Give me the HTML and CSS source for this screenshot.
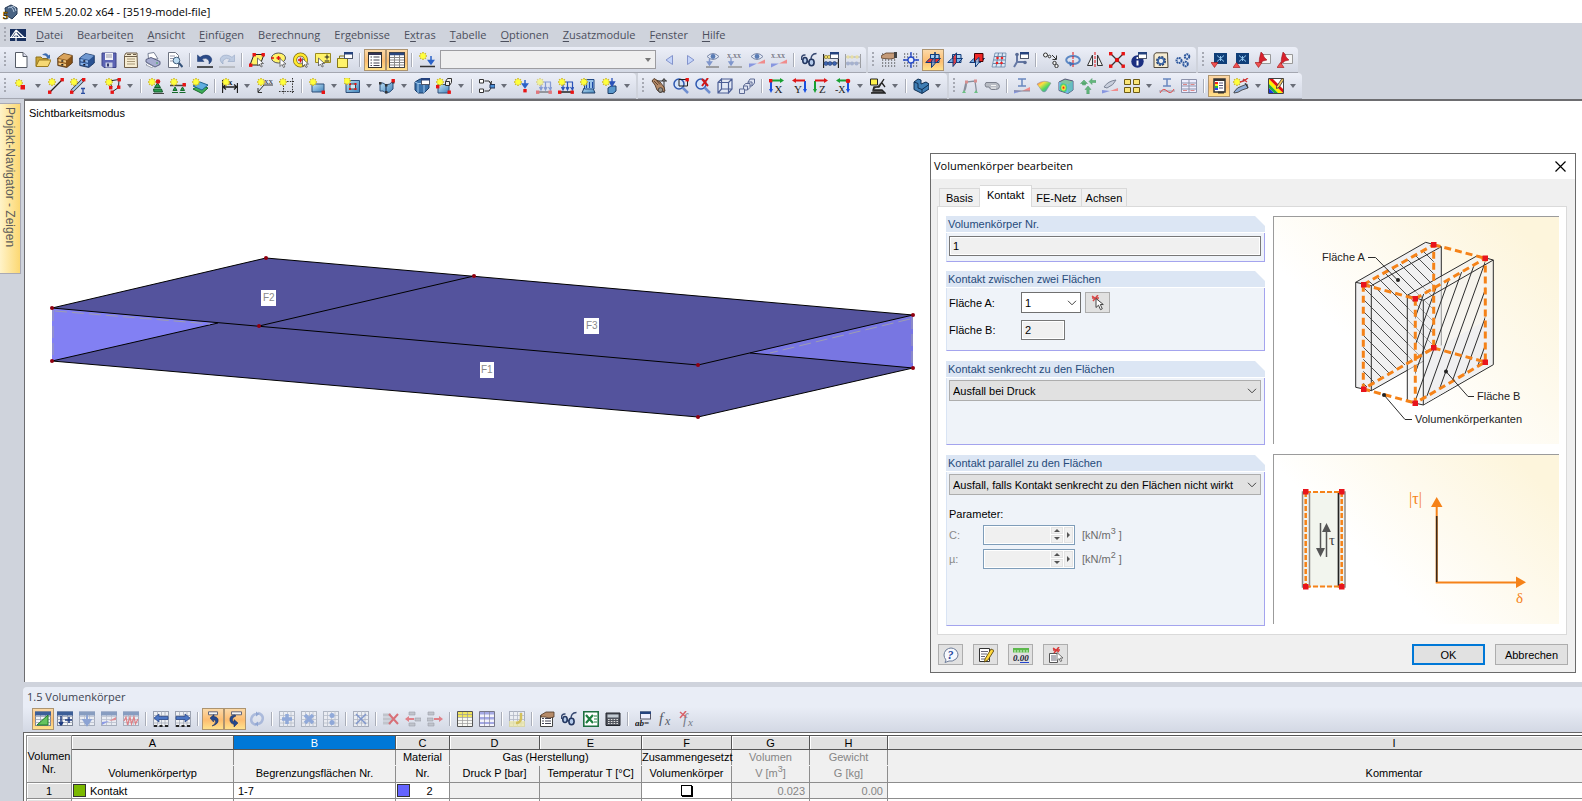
FILE: index.html
```html
<!DOCTYPE html>
<html lang="de">
<head>
<meta charset="utf-8">
<title>RFEM 5.20.02 x64 - [3519-model-file]</title>
<link rel="stylesheet" href="styles.css">
</head>
<body>
<svg class="paints" aria-hidden="true">
<linearGradient id="gBlue" x1="0" y1="0" x2="1" y2="1"><stop offset="0" stop-color="#c4e4f8"/><stop offset="1" stop-color="#3f82b8"/></linearGradient>
<linearGradient id="gRain" x1="0" y1="0" x2="1" y2="1"><stop offset="0" stop-color="#ff4a4a"/><stop offset=".3" stop-color="#ffe040"/><stop offset=".6" stop-color="#50d860"/><stop offset="1" stop-color="#4070ff"/></linearGradient>
<radialGradient id="gHeat"><stop offset="0" stop-color="#e81010"/><stop offset=".35" stop-color="#ffe640"/><stop offset=".65" stop-color="#40d070"/><stop offset="1" stop-color="#70b8e8"/></radialGradient>
</svg>
<svg class="sprite" aria-hidden="true">
<defs>
<g id="star"><path d="M4 0v8M0 4h8M1.200 1.200l5.600 5.600M6.800 1.200L1.200 6.800" stroke="#cdb820" stroke-width="1.500"/><circle cx="4" cy="4" r="2.700" fill="#ffff3a"/></g>
<g id="cur"><path d="M0 0v8l2-2 1.500 3 1.300-.6L3.400 5.500H6z" fill="#fff" stroke="#555" stroke-width=".8"/></g>
<g id="nd"><rect width="3.400" height="3.400" fill="#e81414"/></g>
<g id="sheet"><rect x=".5" y="1" width="15" height="13.500" fill="#f3f5f8" stroke="#7e8798"/><path d="M.5 5.500h15M.5 8.500h15M.5 11.500h15M5.500 4v10M10.500 4v10" stroke="#9aa2b2" stroke-width=".8"/><path d="M0 .5h16v4H0z" fill="#3d5f98"/></g>
<g id="gridg"><rect x=".5" y=".5" width="15" height="15" fill="#eef0f4" stroke="#9aa1b0"/><path d="M.5 4.500h15M.5 8.500h15M.5 12h15M4.500 0v16M8.500 0v16M12 0v16" stroke="#a7adba" stroke-width=".8"/></g>
<g id="dots" stroke="#333" stroke-width="1.200" stroke-dasharray="1.200 1.800"><path d="M1 2h15M1 5h15M1 8h15M1 11h15M1 14h15"/></g>
<g id="win"><rect x=".5" y=".5" width="8" height="6" fill="#fff" stroke="#4e566a"/><path d="M0 0h9v2.500H0z" fill="#24427e"/></g>
</defs>
<symbol id="logo5" viewBox="0 0 16 16"><path d="M3 4l6-3 6 3v6l-5 5-6-4z" fill="#4a6484" stroke="#263a55"/><path d="M6 4q4-3 6 4M9 3q4-2 5 4" stroke="#b8cbe0" fill="none"/><text x="1" y="15" font-size="11" font-weight="700" fill="#e9a400" stroke="#3e3000" stroke-width=".6">5</text></symbol>
<symbol id="bridge" viewBox="0 0 16 12"><path d="M0 0h16v12H0z" fill="#18305f"/><path d="M0 8.500h16M6 1v11M6 1L1 8.500M6 1l8 7.500M6 4L3 8.500M6 4l4 4.500" stroke="#fff" stroke-width="1.200" fill="none"/></symbol>
<symbol id="new" viewBox="0 0 16 16"><path d="M2.500.5h7.500l4 4v11H2.500z" fill="#fff" stroke="#555b66"/><path d="M10 .5v4h4" fill="#dde" stroke="#555b66"/></symbol>
<symbol id="open" viewBox="0 0 16 16"><path d="M1 14V5h5l1.500 1.500H13V14z" fill="#c9a437" stroke="#8e701a"/><path d="M1 14.500L4 8h12l-3 6.500z" fill="#f6d873" stroke="#9a7a20"/><path d="M7 3q4-3.500 6.500.5l1.500-1v4h-4l1.200-1.200Q10.500 2.800 7 3z" fill="#3c6cb0"/></symbol>
<symbol id="cabB" viewBox="0 0 16 16"><path d="M.7 6l6-4.500 8.600 2V11l-5.500 4.500-9-2z" fill="#8a5418" stroke="#4f300c" stroke-width=".8"/><path d="M1 6l9 2 5-4.300-8-2z" fill="#d9a35c"/><path d="M1.500 7l7.500 1.600v2.200L1.500 9.200zM1.500 10.500L9 12v2.300l-7.500-1.600z" fill="#f0c67e"/><path d="M4.300 8.300h2v1.400h-2zM4.300 12h2v1.400h-2z" fill="#222"/></symbol>
<symbol id="cabU" viewBox="0 0 16 16"><path d="M.7 6l6-4.500 8.600 2V11l-5.500 4.500-9-2z" fill="#2a5292" stroke="#12305e" stroke-width=".8"/><path d="M1 6l9 2 5-4.300-8-2z" fill="#7098d0"/><path d="M1.500 7l7.500 1.600v2.200L1.500 9.200zM1.500 10.500L9 12v2.300l-7.500-1.600z" fill="#8ab4e8"/><path d="M4.300 8.300h2v1.400h-2zM4.300 12h2v1.400h-2z" fill="#112"/></symbol>
<symbol id="save" viewBox="0 0 16 16"><path d="M1 1h14v14.500H3L1 13.500z" fill="#5c64b4" stroke="#3e4488"/><path d="M4 1h8v7H4z" fill="#f2f2f6"/><path d="M5 3h6M5 5h6" stroke="#99a"/><path d="M4.500 10.500h7v5h-7z" fill="#cdd2e6"/><path d="M6 11.500h2v3H6z" fill="#333a70"/></symbol>
<symbol id="mgr" viewBox="0 0 16 16"><path d="M1.500 3.500L3 1h11l.5 14.500h-13z" fill="#f6ecd2" stroke="#6d5d48"/><path d="M2 4.500h12M4 2.500h4M10 2.500h3" stroke="#6d5d48"/><path d="M4 7h8M4 9.500h8M4 12h8" stroke="#a89878"/></symbol>
<symbol id="print" viewBox="0 0 16 16"><path d="M3.500 7L3 1.500l6-1L13 7z" fill="#fff" stroke="#7a8296"/><path d="M1 7.500l5-2 9 4v3l-5 2.500-9-5z" fill="#a6acd0" stroke="#5a6080"/><path d="M2.500 11.500l6 3-2 1-5.500-2.500z" fill="#fff" stroke="#7a8296" stroke-width=".7"/><circle cx="12" cy="11" r=".8" fill="#3a4"/></symbol>
<symbol id="prev" viewBox="0 0 16 16"><path d="M1.500.5h7l3 3v12h-10z" fill="#fff" stroke="#6c7280"/><path d="M3 4h5M3 6.500h4M3 9h3" stroke="#99a"/><circle cx="9.500" cy="8.500" r="3.300" fill="#bcdcf2" stroke="#44607e"/><path d="M12 11l3.500 4" stroke="#34527a" stroke-width="2"/></symbol>
<symbol id="undo" viewBox="0 0 16 16"><path d="M.5 3v6.500H7L5 7.300Q9 5 11.500 8q1 1.800.5 4Q17 8 13 4.300 8.500 1.500 3 5.300z" fill="#2a4a88" stroke="#17356a" stroke-width=".5"/><path d="M0 15h16" stroke="#222" stroke-width="1.500"/></symbol>
<symbol id="redo" viewBox="0 0 16 16"><g opacity=".5"><path d="M15.500 3v6.500H9L11 7.300Q7 5 4.500 8q-1 1.800-.5 4Q-1 8 3 4.300 7.500 1.500 13 5.300z" fill="#9db4d6" stroke="#4a6a9a" stroke-width=".6"/><path d="M0 15h16" stroke="#888" stroke-width="1.500"/></g></symbol>
<symbol id="selP" viewBox="0 0 16 16"><path d="M5 2.500h10L11 13H1z" fill="#fff36a" stroke="#222"/><use href="#nd" x="3.500" y="1"/><use href="#nd" x="12.500" y="1"/><use href="#nd" x="0" y="11.500"/><use href="#cur" x="8.500" y="6"/></symbol>
<symbol id="selE" viewBox="0 0 16 16"><ellipse cx="7.500" cy="6" rx="7" ry="5" fill="#fff36a" stroke="#555"/><path d="M0 6h3M5.500 6h4M7.500 4v4" stroke="#e01010" stroke-width="1.500"/><use href="#cur" x="9" y="6.500"/></symbol>
<symbol id="selR" viewBox="0 0 16 16"><circle cx="7.500" cy="8" r="5.500" fill="none" stroke="#7d6a10" stroke-width="4"/><circle cx="7.500" cy="8" r="5.500" fill="none" stroke="#ffe92e" stroke-width="2.600"/><path d="M5 8h5M7.500 5.500v5" stroke="#e01010" stroke-width="1.500"/><use href="#cur" x="9.500" y="6.500"/></symbol>
<symbol id="selQ" viewBox="0 0 16 16"><path d="M.5 1.500h15v9H.5z" fill="#fff36a" stroke="#9a8a20"/><path d="M12 2.500v5M9.700 5h4.600M9.700 9h4.600" stroke="#222"/><use href="#cur" x="3.500" y="6"/></symbol>
<symbol id="winY" viewBox="0 0 16 16"><path d="M.5 6.500h10v9H.5z" fill="#fff36a" stroke="#857718"/><path d="M2.500 6V4h5" stroke="#857718" fill="none"/><use href="#win" x="7" y="0"/></symbol>
<symbol id="list" viewBox="0 0 16 16"><rect x="1.500" y=".5" width="13" height="15" fill="#fff" stroke="#333"/><path d="M2 2h12" stroke="#335" stroke-width="2"/><path d="M6.500 5h6M6.500 8h6M6.500 11h6M6.500 13.500h6" stroke="#445"/><path d="M3.500 5h1.500M3.500 8h1.500M3.500 11h1.500M3.500 13.500h1.500" stroke="#445"/></symbol>
<symbol id="tabl" viewBox="0 0 16 16"><rect x=".5" y=".5" width="15" height="15" fill="#fff" stroke="#444"/><path d="M1 2h14" stroke="#29457d" stroke-width="2.500"/><path d="M1 5.500h14M1 8h14M1 10.500h14M1 13h14M5.500 3v12M10.500 3v12" stroke="#888"/></symbol>
<symbol id="ldst" viewBox="0 0 16 16"><use href="#star"/><path d="M12 4v7M9.500 8.500L12 12l2.500-3.500z" stroke="#2a62c8" stroke-width="1.500" fill="#2a62c8"/><path d="M1 14.500h15" stroke="#333" stroke-width="1.500"/></symbol>
<symbol id="triL" viewBox="0 0 16 16"><path d="M11.500 3.500v9L5 8z" fill="#c4d4fa" stroke="#8494cc"/></symbol>
<symbol id="triR" viewBox="0 0 16 16"><path d="M4.500 3.500v9L11 8z" fill="#c4d4fa" stroke="#8494cc"/></symbol>
<symbol id="eyeP" viewBox="0 0 16 16"><path d="M2 4.500q6-6 12 0-6 6-12 0z" fill="#e2e8f4" stroke="#7b88a8"/><circle cx="8" cy="4.500" r="2.400" fill="#5a7cb4"/><path d="M4.500 7v4M2.500 10l2 3 2-3z" stroke="#7f96cc" fill="#7f96cc" stroke-width="1.500"/><path d="M1 15h13" stroke="#888" stroke-width="1.500"/></symbol>
<symbol id="xxA" viewBox="0 0 16 16"><text x="0" y="5.500" font-size="8" fill="#556">x.xx</text><path d="M4 6v6M2 10l2 3 2-3z" stroke="#7f96cc" fill="#7f96cc" stroke-width="1.300"/><path d="M1 15h14" stroke="#999" stroke-width="1.500"/></symbol>
<symbol id="eyeD" viewBox="0 0 16 16"><path d="M2 4.500q6-6 12 0-6 6-12 0z" fill="#e2e8f4" stroke="#7b88a8"/><circle cx="8" cy="4.500" r="2.400" fill="#5a7cb4"/><path d="M0 15.500V11.500h8z" fill="#8796e0"/><path d="M16 7.500v4H8z" fill="#f08c8c"/></symbol>
<symbol id="xxD" viewBox="0 0 16 16"><text x="0" y="6" font-size="8" fill="#556">x.xx</text><path d="M0 15.500V11.500h8z" fill="#8796e0"/><path d="M16 7.500v4H8z" fill="#f08c8c"/></symbol>
<symbol id="glas" viewBox="0 0 16 16"><path d="M.5 8Q0 2.500 4.500 3M10 9Q9.500 1.500 15.500 1.500M6 9.500l2 .5" stroke="#33456e" fill="none" stroke-width="1.400"/><ellipse cx="4" cy="8.500" rx="2.200" ry="3" fill="#b4caea" stroke="#233660" stroke-width="1.600"/><ellipse cx="10.500" cy="10.500" rx="2.600" ry="3.200" fill="#b4caea" stroke="#233660" stroke-width="1.600"/></symbol>
<symbol id="bead" viewBox="0 0 16 16"><path d="M.5 2v14M15.500 2v14" stroke="#222" stroke-width="1.300"/><path d="M0 5h16M0 11h16" stroke="#444"/><g fill="#ecd968" stroke="#6a5a10" stroke-width=".5"><circle cx="3" cy="5" r="1.700"/><circle cx="6" cy="5" r="1.700"/></g><g fill="#3d64b0" stroke="#142c60" stroke-width=".5"><circle cx="3" cy="11.500" r="2"/><circle cx="7" cy="11.500" r="2"/><circle cx="11.500" cy="11.500" r="2"/></g><use href="#win" x="7" y="0"/></symbol>
<symbol id="beadG" viewBox="0 0 16 16"><g opacity=".55"><path d="M.5 2v14M15.500 2v14" stroke="#666"/><path d="M0 5h16M0 11h16" stroke="#777"/><g fill="#ecd968"><circle cx="3" cy="5" r="1.700"/><circle cx="7" cy="5" r="1.700"/><circle cx="12" cy="5" r="1.700"/></g><g fill="#7a8cb8"><circle cx="3" cy="11.500" r="2"/><circle cx="7" cy="11.500" r="2"/><circle cx="11.500" cy="11.500" r="2"/></g></g></symbol>
<symbol id="handG" viewBox="0 0 16 16"><use href="#dots"/><path d="M0 4l5-3h9v5l-5 1-6-.5Q-.5 7 0 4z" fill="#c49a78" stroke="#5e4028" stroke-width=".8"/><path d="M13 0h3v6h-3z" fill="#444"/></symbol>
<symbol id="snap" viewBox="0 0 16 16"><use href="#dots"/><path d="M8 0v16M0 8h16" stroke="#2448c8" stroke-width="1.300"/><circle cx="8" cy="8" r="3" fill="#e8eefc" stroke="#2448c8" stroke-width="1.300"/></symbol>
<symbol id="plA" viewBox="0 0 16 16"><path d="M5.500 2.500H14v8H5.500z" fill="#a8d0f4" stroke="#123a78"/><path d="M.8 10.500l4-4h10.700l-4 4z" fill="#e83030" stroke="#123a78"/><path d="M5.500 2.500H14v4H5.500z" fill="#a8d0f4" stroke="#123a78"/><path d="M10 0v5L6.500 9v6.500l3.500-4z" fill="#5a94d8" fill-opacity=".7" stroke="#123a78"/></symbol>
<symbol id="plB" viewBox="0 0 16 16"><path d="M5.500 2.500H14v8H5.500z" fill="#a8d0f4" stroke="#123a78"/><path d="M.8 10.500l4-4h10.700l-4 4z" fill="#7ab0e8" stroke="#123a78"/><path d="M9.500.8v9.500L6 14.500V5z" fill="#e83030" fill-opacity=".85" stroke="#123a78"/></symbol>
<symbol id="plC" viewBox="0 0 16 16"><path d="M.8 10.500l4-4h10.700l-4 4z" fill="#7ab0e8" stroke="#123a78"/><path d="M5.500 1.500H14v8H5.500z" fill="#f02828" stroke="#400"/><path d="M10 5.500v5L6.500 15V8.500z" fill="#a8d0f4" fill-opacity=".8" stroke="#123a78"/></symbol>
<symbol id="mesh" viewBox="0 0 16 16"><path d="M4 1h11l-1 14H1z" fill="#dce9f6" stroke="#6a86a8" stroke-width=".8"/><path d="M3 4.500h12M2.500 8h12M2 11.500h12M7.500 1L5 15M11.500 1l-1.500 14" fill="none" stroke="#6a86a8"/><circle cx="6.500" cy="6" r="1.300" fill="#e22"/><circle cx="11" cy="6" r="1.300" fill="#e22"/><circle cx="6" cy="11" r="1.300" fill="#e22"/><circle cx="10.500" cy="11" r="1.300" fill="#e22"/></symbol>
<symbol id="axd" viewBox="0 0 16 16"><path d="M4 2v8h8M4 10l-3 5" stroke="#6578a4" stroke-width="2" fill="none"/><circle cx="4" cy="2.500" r="1.800" fill="#5a6c96"/><circle cx="12" cy="10.500" r="1.800" fill="#5a6c96"/><use href="#win" x="7" y="0"/></symbol>
<symbol id="copyC" viewBox="0 0 16 16"><g fill="#f4f4f4" stroke="#333"><circle cx="2.500" cy="3" r="2"/><circle cx="6.500" cy="4.500" r="1.300"/><circle cx="11.500" cy="11" r="1.700"/><circle cx="13.500" cy="14" r="1.700"/></g><path d="M9 3l4 4M13.500 3.500v4h-4" stroke="#333" fill="none"/></symbol>
<symbol id="rotC" viewBox="0 0 16 16"><ellipse cx="8" cy="8" rx="6.800" ry="4" fill="none" stroke="#5c88c4" stroke-width="2"/><path d="M8 0v16" stroke="#e01010" stroke-dasharray="3 1"/><path d="M5 14.500l-1-5 5 2z" fill="#4272b8"/></symbol>
<symbol id="mirr" viewBox="0 0 16 16"><path d="M.5 13.500h5V3zM15.500 13.500h-5V3z" fill="#eee" stroke="#333"/><path d="M8 0v16" stroke="#e01010" stroke-dasharray="3 1"/></symbol>
<symbol id="scal" viewBox="0 0 16 16"><path d="M1 1l14 14M15 1L1 15" stroke="#333" stroke-width="1.300"/><use href="#nd" x="0" y="0"/><use href="#nd" x="12.500" y="0"/><use href="#nd" x="0" y="12.500"/><use href="#nd" x="12.500" y="12.500"/><circle cx="8" cy="8" r="2.200" fill="#e01010"/></symbol>
<symbol id="info" viewBox="0 0 16 16"><circle cx="6.500" cy="9.500" r="6.200" fill="#1b2f80"/><path d="M6.500 5v2M6.500 8.500v5" stroke="#fff" stroke-width="2"/><use href="#win" x="7" y="0"/></symbol>
<symbol id="gearN" viewBox="0 0 16 16"><path d="M1 2.500L3 .8h11.500l.5 14.700H1z" fill="#f6ecd2" stroke="#4d4538"/><circle cx="8" cy="9" r="3.600" fill="#eee" stroke="#28406e" stroke-width="2.800" stroke-dasharray="1.900 .9"/><circle cx="8" cy="9" r="3" fill="none" stroke="#3c68a8" stroke-width="1.600"/></symbol>
<symbol id="gears" viewBox="0 0 16 16"><g fill="#dfe8f6" stroke="#2c569c" stroke-width="2" stroke-dasharray="1.700 .6"><circle cx="4" cy="8.500" r="2.500"/><circle cx="12" cy="4.500" r="2.300"/><circle cx="10.500" cy="12" r="2.300"/></g></symbol>
<symbol id="scD" viewBox="0 0 16 16"><path d="M3 1h13v11H3z" fill="#0f3e78"/><path d="M6 3.500l7 6M13 3.500l-7 6M9.500 4v5" stroke="#8fc4ee"/><path d="M0 10.500h7L3.500 15.500z" fill="#f05050" stroke="#a01010" stroke-width=".6"/></symbol>
<symbol id="scU" viewBox="0 0 16 16"><path d="M3 1h13v11H3z" fill="#0f3e78"/><path d="M6 3.500l7 6M13 3.500l-7 6M9.500 4v5" stroke="#8fc4ee"/><path d="M0 15.500h7L3.500 10.500z" fill="#f05050" stroke="#a01010" stroke-width=".6"/></symbol>
<symbol id="pdD" viewBox="0 0 16 16"><path d="M6 2.500h9.500v9H6z" fill="#f4f4f4" stroke="#999"/><path d="M6 0q3 2 3 5l3 3-4 1-4 3Q4 6 6 0z" fill="#d8202c" stroke="#8e0c14" stroke-width=".5"/><path d="M0 10.500h7L3.500 15.500z" fill="#f05050" stroke="#a01010" stroke-width=".6"/></symbol>
<symbol id="pdU" viewBox="0 0 16 16"><path d="M6 2.500h9.500v9H6z" fill="#f4f4f4" stroke="#999"/><path d="M6 0q3 2 3 5l3 3-4 1-4 3Q4 6 6 0z" fill="#d8202c" stroke="#8e0c14" stroke-width=".5"/><path d="M0 15.500h7L3.500 10.500z" fill="#f05050" stroke="#a01010" stroke-width=".6"/></symbol>

<symbol id="node" viewBox="0 0 16 16"><use href="#star" x="2" y="1"/><path d="M7.500 7h4.500v4.500H7.500z" fill="#e81414"/></symbol>
<symbol id="line" viewBox="0 0 16 16"><path d="M2 14L14 2" stroke="#222" stroke-width="1.300"/><use href="#star"/><use href="#nd" x="12.500" y="0"/><use href="#nd" x="0" y="12.500"/></symbol>
<symbol id="beam" viewBox="0 0 16 16"><path d="M2 13L13 2" stroke="#333" stroke-width="3.500"/><path d="M2 13L13 2" stroke="#a8cdf0" stroke-width="2"/><use href="#star"/><use href="#nd" x="12" y="0"/><use href="#nd" x="0" y="12.500"/><path d="M11 10.500h4M13 10.500v5M11 15.500h4" stroke="#2b4ea0" stroke-width="1.300"/></symbol>
<symbol id="poly" viewBox="0 0 16 16"><path d="M4 3l10-1.500-.5 8L7 14M4 3l3 6" stroke="#222" fill="none"/><use href="#star"/><use href="#nd" x="12.500" y="0"/><use href="#nd" x="12" y="7.500"/><use href="#nd" x="5.500" y="12.500"/><use href="#nd" x="4" y="8"/></symbol>
<symbol id="supp" viewBox="0 0 16 16"><path d="M9.500 5l3 4.500h-6zM5.500 11l8 0 1 3H6z" fill="#2c9c50" stroke="#145a2a"/><path d="M5 15.500h11" stroke="#444"/><circle cx="10" cy="3.500" r="2.300" fill="#e01414"/><use href="#star"/></symbol>
<symbol id="rail" viewBox="0 0 16 16"><path d="M0 7.500h16" stroke="#444" stroke-width="1.500"/><path d="M5 9l2 3.500H3zM12.500 9l2 3.500h-4zM2 14.500h6M9.500 14.500h6" fill="#28a048" stroke="#146a2a"/><use href="#star"/><use href="#nd" x="12.500" y="5"/></symbol>
<symbol id="layr" viewBox="0 0 16 16"><path d="M1 11l7-4 8 3-6 5.500z" fill="#3cae56" stroke="#1a6a2c"/><path d="M1 8l7-4 8 3-6 5z" fill="#60aee0" stroke="#22648e"/><use href="#star"/></symbol>
<symbol id="dimn" viewBox="0 0 16 16"><path d="M.5 2v13M15.500 5v10M0 9h16M4 6.500L1 9l3 2.500M12 6.500L15 9l-3 2.500" stroke="#222" stroke-width="1.300" fill="none"/><text x="6" y="6.500" font-size="9" font-weight="700" fill="#222">x</text><use href="#star"/></symbol>
<symbol id="xxL" viewBox="0 0 16 16"><path d="M16 7H7L1 14M1 10v4.500h4" stroke="#333" fill="none"/><text x="7" y="5.500" font-size="9" fill="#333">xx</text><use href="#star"/></symbol>
<symbol id="dbox" viewBox="0 0 16 16"><path d="M4.500 2v14M13.500 0v16M0 3.500h16M0 13.500h16" stroke="#333" stroke-dasharray="1.500 1.200"/><use href="#star"/></symbol>
<symbol id="surf" viewBox="0 0 16 16"><path d="M3 6h12v8H3z" fill="url(#gBlue)" stroke="#2e4f78"/><use href="#star"/><use href="#nd" x="12.600" y="12.600"/></symbol>
<symbol id="opng" viewBox="0 0 16 16"><path d="M2 2.500h13.500v12H2z" fill="url(#gBlue)" stroke="#2e4f78"/><path d="M6 6h5.500v5H6z" fill="#cfe6f6" stroke="#444"/><path d="M5 5h2v2H5zM10.500 5h2v2h-2zM5 10h2v2H5zM10.500 10h2v2h-2z" fill="#e01414"/><use href="#star" x="-1" y="-1"/></symbol>
<symbol id="srf2" viewBox="0 0 16 16"><path d="M1 5q3-1 6 2v8Q4 12 1 13zM7 7q4 0 7-4v8q-3 4-7 4z" fill="url(#gBlue)" stroke="#2e4f78"/><path d="M0 4h2.500v2.500H0zM6 6h2.500v2.500H6zM6 13h2.500v2.500H6zM13 3h2.500v2.500H13z" fill="#333"/><use href="#nd" x="12.500" y="1"/></symbol>
<symbol id="sold" viewBox="0 0 16 16"><path d="M1 4l5-3h9v9l-5 5H4l-3-3z" fill="#3a72ac" stroke="#163a68"/><path d="M1 4l3 1.500h6V15M4 5.500V15" stroke="#a4cbed" fill="none"/><use href="#win" x="7" y="0"/></symbol>
<symbol id="sol2" viewBox="0 0 16 16"><path d="M2 6.500h11v8.500H2z" fill="url(#gBlue)" stroke="#2e4f78"/><path d="M9.500 3.500h4v4h-4zM9.500 3.500l2-3h4v4l-2 3" fill="#eee" stroke="#333"/><use href="#star"/><use href="#nd" x="0" y="7"/><use href="#nd" x="11.500" y="12.500"/></symbol>
<symbol id="strc" viewBox="0 0 16 16"><path d="M.5 1.500h4v3.500h-4zM.5 11h4v3.500h-4z" fill="#fff" stroke="#333"/><path d="M5.500 3H10l2 3M10.500 3.500l1.500 2.500.5-3M5.500 13H10l2-3" stroke="#333" fill="none"/><path d="M11 6.500h5v3.500h-5z" fill="#4a90d8" stroke="#235"/></symbol>
<symbol id="ldN" viewBox="0 0 16 16"><use href="#star"/><path d="M11 2v5M8.500 6l2.500 3.500L13.500 6z" stroke="#2a62c8" stroke-width="1.500" fill="#2a62c8"/><use href="#nd" x="9.300" y="11"/></symbol>
<symbol id="ldL" viewBox="0 0 16 16"><path d="M3 4h12M5 4v7M9.500 4v7M14.500 4v7M3.500 9L5 12l1.500-3M8 9l1.500 3L11 9M12.500 9l2 3 1-3" stroke="#2a52b8" stroke-width="1.200" fill="none"/><path d="M1 14h14" stroke="#222" stroke-width="1.500"/><use href="#star"/><use href="#nd" x="0" y="12.500"/><use href="#nd" x="12.500" y="12.500"/></symbol>
<symbol id="ldS" viewBox="0 0 16 16"><path d="M2 15l2-5h9l2 5z" fill="url(#gBlue)" stroke="#1e3f68"/><path d="M4.500 1.500H14V11H4.500z" fill="#9ac2ea" stroke="#234a86"/><path d="M6.500 4v6M9.500 4v6M12.500 4v6" stroke="#1e48a8"/><use href="#star"/></symbol>
<symbol id="ldV" viewBox="0 0 16 16"><path d="M6 10l3-2h5v5l-3 2.500H6z" fill="#5a98cc" stroke="#1e3f68"/><path d="M10 0v5M7.500 4L10 8l2.500-4z" stroke="#2a52b8" fill="#2a52b8" stroke-width="1.300"/><use href="#star"/></symbol>

<symbol id="hndM" viewBox="0 0 16 16"><path d="M13 1v14M1 3h15M11 3l2-2.500L15 3" stroke="#333" fill="none"/><path d="M1 3l3 4 2 5 3 2.500 5-1.500-1-4-4-5-6-3.500z" fill="#b58a68" stroke="#4d3524" stroke-width=".9"/><path d="M3 3l4 4M5.500 2.500L9 6.500" stroke="#4d3524" stroke-width=".8"/><circle cx="9.500" cy="12" r="2.300" fill="#99958c" stroke="#333" stroke-width=".8"/></symbol>
<symbol id="zoomW" viewBox="0 0 16 16"><circle cx="6" cy="6" r="5" fill="#d5e4f8" stroke="#2e58b0" stroke-width="1.500"/><path d="M9.500 9.500l5.500 5.500" stroke="#6e8ed0" stroke-width="2.500"/><path d="M6 1.500h8.500V8H6z" fill="none" stroke="#222"/><use href="#nd" x="12.500" y="0"/></symbol>
<symbol id="zoomX" viewBox="0 0 16 16"><circle cx="6" cy="6" r="5" fill="#d5e4f8" stroke="#2e58b0" stroke-width="1.500"/><path d="M9.500 9.500l5.500 5.500" stroke="#6e8ed0" stroke-width="2.500"/><path d="M7 1l6 7M13 0L7 8" stroke="#d01818" stroke-width="2"/></symbol>
<symbol id="cubW" viewBox="0 0 16 16"><path d="M1 4.500h10.500V15H1zM4.500 1H15v10L11.500 15V4.500L15 1M1 4.500L4.500 1v10L1 15M4.500 11H15" fill="#e6ecfa" fill-opacity=".6" stroke="#4d5f96" stroke-width="1.200"/></symbol>
<symbol id="casc" viewBox="0 0 16 16"><g fill="#dfe4f2" stroke="#5d6a94"><path d="M9 4l2-3h4.500v4L13 8"/><path d="M9 4h4v4H9z"/><path d="M4.500 8l2-2.500H11v4L8.500 12"/><path d="M4.500 8h4v4h-4z"/><path d="M.5 11h5v4.500h-5z"/></g></symbol>
<symbol id="vX" viewBox="0 0 16 16"><path d="M2 3v10" stroke="#1a50e0" stroke-width="2"/><path d="M0 11h4l-2 4z" fill="#1a50e0"/><path d="M2 2.500h10" stroke="#18a030" stroke-width="2"/><path d="M11 0v5l4-2.500z" fill="#18a030"/><text x="5.500" y="15" font-size="11" fill="#222">X</text><use href="#nd" x="0" y="1"/></symbol>
<symbol id="vY" viewBox="0 0 16 16"><path d="M14 3v10" stroke="#1a50e0" stroke-width="2"/><path d="M12 11h4l-2 4z" fill="#1a50e0"/><path d="M14 2.500H4" stroke="#e01818" stroke-width="2"/><path d="M5 0v5L1 2.500z" fill="#e01818"/><text x="3" y="15" font-size="11" fill="#222">Y</text></symbol>
<symbol id="vZ" viewBox="0 0 16 16"><path d="M2 3v10" stroke="#18a030" stroke-width="2"/><path d="M0 11h4l-2 4z" fill="#18a030"/><path d="M2 2.500h10" stroke="#e01818" stroke-width="2"/><path d="M11 0v5l4-2.500z" fill="#e01818"/><text x="6" y="15" font-size="11" fill="#222">Z</text></symbol>
<symbol id="vM" viewBox="0 0 16 16"><path d="M13 3v10" stroke="#1a50e0" stroke-width="2"/><path d="M11 11h4l-2 4z" fill="#1a50e0"/><path d="M13 2.500H4" stroke="#18a030" stroke-width="2"/><path d="M5 0v5L1 2.500z" fill="#18a030"/><text x="0" y="14.500" font-size="10" fill="#222">-X</text><circle cx="13" cy="3" r="2.300" fill="#e01414"/></symbol>
<symbol id="rend" viewBox="0 0 16 16"><path d="M.5 1h7v6h-7z" fill="#fff14a" stroke="#222"/><path d="M14 1L9 9H4l-1 3h9l3 3H1M12 5l3 4" fill="#555" stroke="#222" stroke-width="1.300"/></symbol>
<symbol id="lsol" viewBox="0 0 16 16"><path d="M1 4l4-3 3 1v4l5-2 3 2v5l-7 4.500-8-4z" fill="#3f7eb4" stroke="#0f2f52"/><path d="M1 4l4 1.500V10l4 1.500 7-5M9 11.500V15" stroke="#0f2f52" fill="none"/></symbol>
<symbol id="frmG" viewBox="0 0 16 16"><path d="M2 13L4 4M14.500 14L13 3 4 4q1 4-1.500 9" stroke="#8a8f9c" fill="none" stroke-width="1.300"/><path d="M3 2.500h3v3H3zM12 1.500h3v3h-3z" fill="#d89090"/><path d="M0 15l2-3 2 3zM12 15l2-3 2 3z" fill="#6cc084"/></symbol>
<symbol id="roll" viewBox="0 0 16 16"><path d="M2 4.500h10q3.500 1 3.500 4t-4 3H8q-2 0-3-2.500H2q-2-2 0-4.500z" fill="#b8bcc4" stroke="#7d828e"/><path d="M7 7.500h5M7 10h5" stroke="#f4f4f4"/></symbol>
<symbol id="idia" viewBox="0 0 16 16"><path d="M4 1h8M8 1v7M4 8h8" stroke="#6a88c0" stroke-width="1.500"/><path d="M0 15.500V12l8 1z" fill="#8796e0"/><path d="M16 9v4H8z" fill="#f08c8c"/><path d="M0 13h16" stroke="#889"/></symbol>
<symbol id="cont" viewBox="0 0 16 16"><path d="M1 6q7-5 14-1l-5 8q-2 2-4 0z" fill="url(#gRain)" stroke="#889" stroke-width=".5"/></symbol>
<symbol id="cubH" viewBox="0 0 16 16"><path d="M1 4l6-3 8 2v9l-5 3.500-9-3z" fill="#80c4a0" stroke="#557"/><path d="M1 4l9 2.500V15.500L1 12z" fill="url(#gHeat)"/><path d="M10 6.500l5-3.500v9l-5 3.500z" fill="#5cbcd0" fill-opacity=".7"/></symbol>
<symbol id="grnA" viewBox="0 0 16 16"><path d="M.5 5.500L4 2l3.500 3.500zM2.500 5h3v2h-3zM9 3.500L12 .5v2h4v2h-4v2zM8 8l3 3.500H9.200V16H6.800v-4.500H5z" fill="#62b87c" stroke="#4c9864" stroke-width=".5"/></symbol>
<symbol id="penG" viewBox="0 0 16 16"><path d="M2 9q4-6 12-7-2 5-9 8z" fill="#c8cedc" stroke="#7d8698"/><path d="M0 15.500V12l8 1z" fill="#8796e0"/><path d="M16 10v3H8z" fill="#f08c8c"/></symbol>
<symbol id="sq4" viewBox="0 0 16 16"><g fill="#fbe678" stroke="#6b5a14"><path d="M.5 1.500h6v5h-6zM9.500 1.500h6v5h-6zM.5 9.500h6v5h-6zM9.500 9.500h6v5h-6z"/></g></symbol>
<symbol id="isin" viewBox="0 0 16 16"><path d="M4 1h8M8 1v7M4 8h8" stroke="#6a88c0" stroke-width="1.500"/><path d="M0 13h16" stroke="#99a"/><path d="M1 15q3-6 7-2t7-2" stroke="#e04848" fill="none"/></symbol>
<symbol id="tabG" viewBox="0 0 16 16"><path d="M.5 1.500h15v13H.5zM.5 5h15M.5 8h15M.5 11h15M8 1v14" fill="#eef" stroke="#8d93ac"/><path d="M2 6.500h4M9.500 6.500h4M2 12.500h4M9.500 12.500h4" stroke="#d88"/></symbol>
<symbol id="legd" viewBox="0 0 16 16"><rect x="3" y="1" width="11" height="13" fill="#fff" stroke="#333" stroke-width="1.500"/><path d="M3 2h11" stroke="#333" stroke-width="2"/><path d="M8 5h4M8 7.500h4M8 10h4" stroke="#557"/><path d="M4 4h3v2H4z" fill="#e22"/><path d="M4 6h3v2H4z" fill="#fe2"/><path d="M4 8h3v2H4z" fill="#2b4"/><path d="M4 10h3v2H4z" fill="#24e"/><path d="M7 14.500h6" stroke="#333" stroke-width="2"/></symbol>
<symbol id="stpn" viewBox="0 0 16 16"><use href="#star"/><path d="M7 4l4-1 4-3M10 1l4 3" stroke="#d83838" stroke-width="1.300"/><path d="M1 14q3-5 8-6l5-2 1 4-6 2q-4 3-8 3z" fill="#8eacd8" stroke="#333" stroke-width=".8"/><path d="M12 5l3 5" stroke="#333"/></symbol>
<symbol id="rain" viewBox="0 0 16 16"><path d="M.5.5h15v15H.5z" fill="#fff" stroke="#444"/><path d="M1 1l14 14H10L1 6z" fill="#fff000"/><path d="M1 1h4l10 10v4z" fill="#e01010"/><path d="M1 6l9 9H6l-5-5z" fill="#1fae38"/><path d="M1 10l5 5H1z" fill="#1c38e0"/><path d="M8.500 8.500L14 .5l2 1-5 8-2.500 1z" fill="#f4c860" stroke="#333" stroke-width=".8"/></symbol>

<symbol id="t1" viewBox="0 0 16 16"><use href="#sheet"/><path d="M2 14L13 4v10z" fill="#65c45e" stroke="#237a28"/></symbol>
<symbol id="t2" viewBox="0 0 16 16"><use href="#sheet"/><path d="M4 5v8M2 11l2 3 2-3M8 9h7M12 6v6" stroke="#1c3a80" stroke-width="1.500" fill="none"/></symbol>
<symbol id="t3" viewBox="0 0 16 16"><g opacity=".55"><use href="#sheet"/><path d="M8 4v6M4.500 9L8 14l3.500-5z" stroke="#4a70c0" stroke-width="2" fill="#4a70c0"/></g></symbol>
<symbol id="t4" viewBox="0 0 16 16"><g opacity=".55"><use href="#sheet"/><path d="M1 14v-3l7-1z" fill="#4a60e0"/><path d="M15 6v3l-7 1z" fill="#e04848"/></g></symbol>
<symbol id="t5" viewBox="0 0 16 16"><g opacity=".55"><use href="#sheet"/><path d="M1 10l2-4 1.500 8L7 6l1.500 7L11 6l1.500 7L15 8" stroke="#e03030" fill="none" stroke-width="1.200"/></g></symbol>
<symbol id="tL" viewBox="0 0 16 16"><use href="#gridg"/><path d="M1 7l5-4v2.500h9v3H6V11z" fill="#4c76c4" stroke="#223f80" stroke-width=".7"/><path d="M1 15h3M6.500 15h3M12 15h3" stroke="#222" stroke-width="2"/></symbol>
<symbol id="tR" viewBox="0 0 16 16"><use href="#gridg"/><path d="M15 7l-5-4v2.500H1v3h9V11z" fill="#4c76c4" stroke="#223f80" stroke-width=".7"/><path d="M1 15h3M6.500 15h3M12 15h3" stroke="#222" stroke-width="2"/></symbol>
<symbol id="tU" viewBox="0 0 16 16"><path d="M3.500.8h9v3h-9z" fill="#f4f4f4" stroke="#667"/><path d="M5 7l4-3.500V5.500q5 .5 4 5.500-1.500 3-6 4 4-2 3.500-5Q10 9 8.500 8.500V11z" fill="#27488c" stroke="#122c60" stroke-width=".5"/></symbol>
<symbol id="tD" viewBox="0 0 16 16"><path d="M4.500.8h10v3h-10z" fill="#f4f4f4" stroke="#667"/><path d="M8 4Q2 4 3 10q1 3 4 3.500V16l4-4-4-3.500V11Q5 10 5.500 8 6 6 9 5z" fill="#27488c" stroke="#122c60" stroke-width=".5"/></symbol>
<symbol id="tC" viewBox="0 0 16 16"><g opacity=".55" stroke="#8098cc" fill="none" stroke-width="2.500"><path d="M7 14Q1 12 2.500 7 4 3 8 3M9 2q6 2 4.500 7-1.500 4-5.500 4"/></g><path d="M7 .5l3.500 2.500L7 5.500zM9 10.500L5.500 13 9 15.500z" fill="#90a6d2"/></symbol>
<symbol id="tP" viewBox="0 0 16 16"><g opacity=".7"><use href="#gridg"/><path d="M8 3v10M3 8h10" stroke="#6f90d0" stroke-width="3.500"/></g></symbol>
<symbol id="tS" viewBox="0 0 16 16"><g opacity=".7"><use href="#gridg"/><path d="M4 4l8 8M12 4l-8 8" stroke="#6f90d0" stroke-width="3.500"/></g></symbol>
<symbol id="tO" viewBox="0 0 16 16"><g opacity=".7"><use href="#gridg"/><circle cx="9" cy="4.500" r="2.500" fill="#6f90d0"/><circle cx="9" cy="11.500" r="2.500" fill="#6f90d0"/></g></symbol>
<symbol id="tX" viewBox="0 0 16 16"><g opacity=".8"><use href="#gridg"/><path d="M3 3l10 10M13 3L3 13" stroke="#6a85c4" stroke-width="1.500"/></g></symbol>
<symbol id="rX" viewBox="0 0 16 16"><path d="M0 2.500h8v3H0zM0 6.500h9v3H0zM0 10.500h8v3H0z" fill="#c0c4cc"/><path d="M6 3l9 10M15 3L6 13" stroke="#d87078" stroke-width="2"/></symbol>
<symbol id="rL" viewBox="0 0 16 16"><path d="M4 1h6v3H4zM10 7h6v3h-6zM4 12h6v3H4z" fill="#c0c4cc" stroke="#9a9fa8" stroke-width=".6"/><path d="M0 8l4-3v2h5v2H4v2z" fill="#e08088"/></symbol>
<symbol id="rR" viewBox="0 0 16 16"><path d="M1 1h6v3H1zM0 7h6v3H0zM1 12h6v3H1z" fill="#c0c4cc" stroke="#9a9fa8" stroke-width=".6"/><path d="M16 8l-4-3v2H7v2h5v2z" fill="#e08088"/></symbol>
<symbol id="yT" viewBox="0 0 16 16"><path d="M.5.5h15v15H.5z" fill="#f8f8f4" stroke="#555"/><path d="M1 1h14v5H1z" fill="#f2e65c"/><path d="M1 6.500h14M1 9.500h14M1 12.500h14M5.500 1v14M10.500 1v14M1 3.500h14" stroke="#999" stroke-width=".7"/></symbol>
<symbol id="bT" viewBox="0 0 16 16"><path d="M.5.5h15v15H.5z" fill="#f4f4fb" stroke="#778"/><path d="M1 1h14v2.500H1zM1 6h14v2.500H1zM1 11h14v2H1z" fill="#a4a8e4"/><path d="M5.500 1v14M10.500 1v14" stroke="#889" stroke-width=".7"/></symbol>
<symbol id="yM" viewBox="0 0 16 16"><g opacity=".8"><use href="#gridg"/><path d="M0 10h16v6H0z" fill="#f2ea90" fill-opacity=".7"/><path d="M12 2v6q-1 4-5 4" stroke="#d0b838" stroke-width="2.500" fill="none"/></g></symbol>
<symbol id="hndL" viewBox="0 0 16 16"><path d="M1.500 4.500h12v11h-12z" fill="#fff" stroke="#444"/><path d="M3 7.500h2M6 7.500h6M3 10h2M6 10h6M3 12.500h2M6 12.500h6" stroke="#445"/><path d="M2 4l5-3h8v5l-5 1-4-1-4 0z" fill="#b58a68" stroke="#4d3524" stroke-width=".8"/></symbol>
<symbol id="xls" viewBox="0 0 16 16"><path d="M.8.8h14.400v14.400H.8z" fill="#fff" stroke="#1f7040" stroke-width="1.600"/><path d="M3 4l7 8M10 4l-7 8" stroke="#1f8040" stroke-width="2.200"/><path d="M11 5h3M11 8h3M11 11h3" stroke="#1f8040"/></symbol>
<symbol id="calc" viewBox="0 0 16 16"><path d="M1 2h14v12.500H1z" fill="#50545e" stroke="#22252c"/><path d="M2.500 3.500h11v3h-11z" fill="#c4ccd4"/><path d="M3 8.500h10M3 10.500h10M3 12.500h10" stroke="#ddd" stroke-dasharray="1.600 1.200" stroke-width="1.200"/></symbol>
<symbol id="abw" viewBox="0 0 16 16"><rect x="5.500" y="1" width="10" height="7" fill="#eef" stroke="#556"/><path d="M5 .5h11v2.500H5z" fill="#24427e"/><text x="0" y="15" font-size="9" font-weight="700" font-style="italic" fill="#111">ab=</text></symbol>
<symbol id="fx" viewBox="0 0 16 16"><text x="2" y="12" font-size="15" font-style="italic" fill="#555a66">f</text><text x="8" y="14" font-size="12" font-style="italic" fill="#555a66">x</text></symbol>
<symbol id="fxX" viewBox="0 0 16 16"><text x="4" y="13" font-size="14" font-style="italic" fill="#777c88">f</text><text x="9" y="15" font-size="11" font-style="italic" fill="#777c88">x</text><path d="M1 1l6 5M7 0L1 7" stroke="#d86068" stroke-width="1.500"/></symbol>

<symbol id="help" viewBox="0 0 16 16"><path d="M3 13Q-1 8 3 3q5-4 10 0 4 5 0 9-4 3-7 2l-4 1.500z" fill="#f6f8fd" stroke="#6d7c98"/><text x="4.500" y="12" font-size="12" font-weight="700" font-style="italic" fill="#2747a0">?</text></symbol>
<symbol id="edit" viewBox="0 0 16 16"><path d="M1.500 1.500h10v13h-10z" fill="#fff" stroke="#333"/><path d="M3 4.500h7M3 7h6M3 9.500h4M3 12h4" stroke="#667"/><path d="M7 12l6-10 3 1.500L10 13l-3.500 2z" fill="#ffd83c" stroke="#5e4a10" stroke-width=".9"/></symbol>
<symbol id="unit" viewBox="0 0 16 16"><path d="M0 1h16v4.500H0z" fill="#5cb84c"/><path d="M2 3v2.500M5 3v2.500M8 3v2.500M11 3v2.500M14 3v2.500" stroke="#d8ffd0"/><text x="0" y="13.500" font-size="9" font-weight="700" font-style="italic" fill="#223">0.00</text><path d="M7 15.500h9" stroke="#24c"/></symbol>
<symbol id="pick" viewBox="0 0 16 16"><path d="M1.500 6.500h8v9h-8z" fill="#fff" stroke="#555"/><path d="M3 9h5M3 11h5M3 13h5" stroke="#667"/><path d="M5 1l6 4M11 0L6 6M5 3h7" stroke="#d83838" stroke-width="1.500"/><use href="#cur" x="9" y="5.500"/></symbol>
<symbol id="pckX" viewBox="0 0 16 16"><path d="M2 1l6 4M8 0L3 6M2 3h7" stroke="#d84848" stroke-width="1.500"/><path d="M6 3.500v9l2.500-2.300 2 4.500 1.800-.9-2-4.300h3z" fill="#fff" stroke="#444"/></symbol>
</svg>

<header class="titlebar"><svg class="ic"><use href="#logo5"/></svg><h1>RFEM 5.20.02 x64 - [3519-model-file]</h1></header>

<nav class="menubar" aria-label="Hauptmenü">
<i class="grip"></i><svg class="bridge"><use href="#bridge"/></svg>
<button><u>D</u>atei</button><button>Bearbeite<u>n</u></button><button><u>A</u>nsicht</button><button><u>E</u>infügen</button><button>Be<u>r</u>echnung</button><button>Er<u>g</u>ebnisse</button><button>E<u>x</u>tras</button><button><u>T</u>abelle</button><button><u>O</u>ptionen</button><button><u>Z</u>usatzmodule</button><button><u>F</u>enster</button><button><u>H</u>ilfe</button>
</nav>

<div class="toolrow">
<div class="bar">
<i class="grip"></i>
<button class="tb" aria-label="Neu"><svg><use href="#new"/></svg></button><button class="tb" aria-label="Öffnen"><svg><use href="#open"/></svg></button><button class="tb" aria-label="Projekte"><svg><use href="#cabB"/></svg></button><button class="tb" aria-label="Blöcke"><svg><use href="#cabU"/></svg></button><button class="tb" aria-label="Speichern"><svg><use href="#save"/></svg></button><button class="tb" aria-label="Manager"><svg><use href="#mgr"/></svg></button><button class="tb" aria-label="Drucken"><svg><use href="#print"/></svg></button><button class="tb" aria-label="Vorschau"><svg><use href="#prev"/></svg></button>
<i class="sep"></i>
<button class="tb" aria-label="Rückgängig"><svg><use href="#undo"/></svg></button><button class="tb" aria-label="Wiederherstellen"><svg><use href="#redo"/></svg></button>
<i class="sep"></i>
<button class="tb" aria-label="Auswahl Rhomboid"><svg><use href="#selP"/></svg></button><button class="tb" aria-label="Auswahl Ellipse"><svg><use href="#selE"/></svg></button><button class="tb" aria-label="Auswahl Ring"><svg><use href="#selR"/></svg></button><button class="tb" aria-label="Spezielle Auswahl"><svg><use href="#selQ"/></svg></button><button class="tb" aria-label="Fenster"><svg><use href="#winY"/></svg></button>
<i class="sep"></i>
<button class="tb on" aria-label="Navigator"><svg><use href="#list"/></svg></button><button class="tb on" aria-label="Tabelle"><svg><use href="#tabl"/></svg></button>
<i class="sep"></i>
<button class="tb" aria-label="Neuer Lastfall"><svg><use href="#ldst"/></svg></button>
<span class="pick loadcase"><select aria-label="Lastfall" disabled><option></option></select><i class="tri"></i></span>
<button class="tb" aria-label="Vorheriger"><svg><use href="#triL"/></svg></button><button class="tb" aria-label="Nächster"><svg><use href="#triR"/></svg></button><button class="tb" aria-label="Lasten zeigen"><svg><use href="#eyeP"/></svg></button><button class="tb" aria-label="Lastwerte"><svg><use href="#xxA"/></svg></button><button class="tb" aria-label="Ergebnisse zeigen"><svg><use href="#eyeD"/></svg></button><button class="tb" aria-label="Ergebniswerte"><svg><use href="#xxD"/></svg></button>
<i class="sep"></i>
<button class="tb" aria-label="Betrachten"><svg><use href="#glas"/></svg></button><button class="tb" aria-label="Berechnungsparameter"><svg><use href="#bead"/></svg></button><button class="tb" aria-label="Berechnen"><svg><use href="#beadG"/></svg></button>
</div>
<div class="bar">
<i class="grip"></i>
<button class="tb" aria-label="Arbeitsebene"><svg><use href="#handG"/></svg></button><button class="tb" aria-label="Fang"><svg><use href="#snap"/></svg></button><button class="tb on" aria-label="Ebene XY"><svg><use href="#plA"/></svg></button><button class="tb" aria-label="Ebene YZ"><svg><use href="#plB"/></svg></button><button class="tb" aria-label="Ebene XZ"><svg><use href="#plC"/></svg></button><button class="tb" aria-label="Netz"><svg><use href="#mesh"/></svg></button><button class="tb" aria-label="Koordinatensystem"><svg><use href="#axd"/></svg></button>
<i class="sep"></i>
<button class="tb" aria-label="Kopieren"><svg><use href="#copyC"/></svg></button><button class="tb" aria-label="Rotieren"><svg><use href="#rotC"/></svg></button><button class="tb" aria-label="Spiegeln"><svg><use href="#mirr"/></svg></button><button class="tb" aria-label="Verbinden"><svg><use href="#scal"/></svg></button><button class="tb" aria-label="Info"><svg><use href="#info"/></svg></button><button class="tb" aria-label="Konfiguration"><svg><use href="#gearN"/></svg></button><button class="tb" aria-label="Optionen"><svg><use href="#gears"/></svg></button>
</div>
<div class="bar">
<i class="grip"></i>
<button class="tb" aria-label="Import"><svg><use href="#scD"/></svg></button><button class="tb" aria-label="Export"><svg><use href="#scU"/></svg></button><button class="tb" aria-label="CAD Import"><svg><use href="#pdD"/></svg></button><button class="tb" aria-label="CAD Export"><svg><use href="#pdU"/></svg></button>
</div>
</div>

<div class="toolrow">
<div class="bar">
<i class="grip"></i>
<button class="tb drop" aria-label="Knoten"><svg><use href="#node"/></svg></button><button class="tb" aria-label="Linie"><svg><use href="#line"/></svg></button><button class="tb drop" aria-label="Stab"><svg><use href="#beam"/></svg></button><button class="tb drop" aria-label="Polylinie"><svg><use href="#poly"/></svg></button>
<i class="sep"></i>
<button class="tb" aria-label="Knotenlager"><svg><use href="#supp"/></svg></button><button class="tb" aria-label="Linienlager"><svg><use href="#rail"/></svg></button><button class="tb" aria-label="Flächenlager"><svg><use href="#layr"/></svg></button>
<i class="sep"></i>
<button class="tb drop" aria-label="Bemaßung"><svg><use href="#dimn"/></svg></button><button class="tb" aria-label="Kommentar"><svg><use href="#xxL"/></svg></button><button class="tb" aria-label="Hilfslinien"><svg><use href="#dbox"/></svg></button>
<i class="sep"></i>
<button class="tb drop" aria-label="Fläche"><svg><use href="#surf"/></svg></button><button class="tb drop" aria-label="Öffnung"><svg><use href="#opng"/></svg></button><button class="tb drop" aria-label="Gekrümmte Fläche"><svg><use href="#srf2"/></svg></button><button class="tb" aria-label="Volumen"><svg><use href="#sold"/></svg></button><button class="tb drop" aria-label="Neues Volumen"><svg><use href="#sol2"/></svg></button>
<i class="sep"></i>
<button class="tb drop" aria-label="Struktur"><svg><use href="#strc"/></svg></button><button class="tb" aria-label="Knotenlast"><svg><use href="#ldN"/></svg></button><button class="tb dim" aria-label="Stablast"><svg><use href="#ldL"/></svg></button><button class="tb" aria-label="Linienlast"><svg><use href="#ldL"/></svg></button><button class="tb" aria-label="Flächenlast"><svg><use href="#ldS"/></svg></button><button class="tb drop" aria-label="Volumenlast"><svg><use href="#ldV"/></svg></button>
</div>
<div class="bar">
<i class="grip"></i>
<button class="tb" aria-label="Verschieben"><svg><use href="#hndM"/></svg></button><button class="tb" aria-label="Zoom"><svg><use href="#zoomW"/></svg></button><button class="tb" aria-label="Alles zeigen"><svg><use href="#zoomX"/></svg></button><button class="tb" aria-label="Drahtmodell"><svg><use href="#cubW"/></svg></button><button class="tb" aria-label="Ansichten"><svg><use href="#casc"/></svg></button>
<i class="sep"></i>
<button class="tb" aria-label="Ansicht in X"><svg><use href="#vX"/></svg></button><button class="tb" aria-label="Ansicht in Y"><svg><use href="#vY"/></svg></button><button class="tb" aria-label="Ansicht in Z"><svg><use href="#vZ"/></svg></button><button class="tb drop" aria-label="Ansicht in -X"><svg><use href="#vM"/></svg></button><button class="tb drop" aria-label="Darstellung"><svg><use href="#rend"/></svg></button>
<i class="sep"></i>
<button class="tb drop" aria-label="Sichtbarkeit"><svg><use href="#lsol"/></svg></button>
</div>
<div class="bar">
<i class="grip"></i>
<button class="tb" aria-label="Verformung"><svg><use href="#frmG"/></svg></button><button class="tb" aria-label="Schnitte"><svg><use href="#roll"/></svg></button>
<i class="sep"></i>
<button class="tb" aria-label="Stabergebnisse"><svg><use href="#idia"/></svg></button><button class="tb" aria-label="Flächenergebnisse"><svg><use href="#cont"/></svg></button><button class="tb" aria-label="Volumenergebnisse"><svg><use href="#cubH"/></svg></button><button class="tb" aria-label="Lagerkräfte"><svg><use href="#grnA"/></svg></button><button class="tb" aria-label="Schnittverläufe"><svg><use href="#penG"/></svg></button><button class="tb drop" aria-label="Fensteranordnung"><svg><use href="#sq4"/></svg></button><button class="tb" aria-label="Verlauf"><svg><use href="#isin"/></svg></button><button class="tb" aria-label="Ergebnistabelle"><svg><use href="#tabG"/></svg></button>
<i class="sep"></i>
<button class="tb on" aria-label="Panel"><svg><use href="#legd"/></svg></button><button class="tb drop" aria-label="Objekteigenschaften"><svg><use href="#stpn"/></svg></button><button class="tb drop" aria-label="Farben"><svg><use href="#rain"/></svg></button>
</div>
</div>

<main class="work">
<aside class="dock"><button class="docktab">Projekt-Navigator - Zeigen</button></aside>
<section class="view">
<p class="mode">Sichtbarkeitsmodus</p>
<svg class="model" width="900" height="340" viewBox="25 120 900 340">
<path d="M52 308L266 258 913 315v53L698 417 52 361z" fill="#54539d"/>
<path d="M52 308l166 15L52 361z" fill="#8280f3"/>
<path d="M913 315v53l-163-15z" fill="#7876e2"/>
<path d="M52 308L266 258 913 315 698 365zM52 361L698 417 913 368M52 361l166-38M750 353l163 15M259 326l215-50" fill="none" stroke="#000"/>
<path d="M53 309v51M55 311l155 13M912 317v50M910 319l-140 34" fill="none" stroke="#9d9db0" stroke-dasharray="12 5"/>
<g fill="#900010"><circle cx="52" cy="308" r="2"/><circle cx="266" cy="258" r="2"/><circle cx="474" cy="276" r="2"/><circle cx="913" cy="315" r="2"/><circle cx="913" cy="368" r="2"/><circle cx="698" cy="417" r="2"/><circle cx="698" cy="365" r="2"/><circle cx="259" cy="326" r="2"/><circle cx="52" cy="361" r="2"/></g>
<path d="M261 290h15v16h-15zM584 318h15v16h-15zM480 362h14v16h-14z" fill="#fff"/>
<g font-size="10" fill="#8a8a8a"><text x="263" y="301">F2</text><text x="586" y="329">F3</text><text x="481" y="373">F1</text></g>
</svg>

<div class="dialog" role="dialog" aria-labelledby="dlgTitle">
<header class="dtitle"><h2 id="dlgTitle">Volumenkörper bearbeiten</h2><button class="close" aria-label="Schließen"><svg width="11" height="11" viewBox="0 0 11 11"><path d="M.5.5l10 10M10.500.5L.5 10.500" stroke="#000" stroke-width="1.200"/></svg></button></header>
<div class="tabs" role="tablist"><button role="tab">Basis</button><button role="tab" class="cur" aria-selected="true">Kontakt</button><button role="tab">FE-Netz</button><button role="tab">Achsen</button></div>
<div class="pane">
<div class="form">
<section class="group g1"><h3><label for="nr">Volumenkörper Nr.</label></h3><div class="gbody"><input id="nr" class="box" value="1" readonly></div></section>
<section class="group g2"><h3>Kontakt zwischen zwei Flächen</h3><div class="gbody">
<div class="row"><label for="fa">Fläche A:</label><span class="pick white"><select id="fa"><option>1</option></select><svg class="chev" viewBox="0 0 10 6"><path d="M1 .8l4 4 4-4" fill="none" stroke="#444"/></svg></span><button class="sq" aria-label="Fläche wählen"><svg class="ic"><use href="#pckX"/></svg></button></div>
<div class="row"><label for="fb">Fläche B:</label><input id="fb" class="box short" value="2" readonly></div>
</div></section>
<section class="group g3"><h3><label for="ks">Kontakt senkrecht zu den Flächen</label></h3><div class="gbody"><span class="pick grey"><select id="ks"><option>Ausfall bei Druck</option></select><svg class="chev" viewBox="0 0 10 6"><path d="M1 .8l4 4 4-4" fill="none" stroke="#444"/></svg></span></div></section>
<section class="group g4"><h3><label for="kp">Kontakt parallel zu den Flächen</label></h3><div class="gbody"><span class="pick grey"><select id="kp"><option>Ausfall, falls Kontakt senkrecht zu den Flächen nicht wirkt</option></select><svg class="chev" viewBox="0 0 10 6"><path d="M1 .8l4 4 4-4" fill="none" stroke="#444"/></svg></span>
<p class="plabel">Parameter:</p>
<div class="row off"><label for="pc">C:</label><span class="spin"><input id="pc" disabled><span class="ud"><button disabled aria-label="Mehr"><i class="up"></i></button><button disabled aria-label="Weniger"><i class="dn"></i></button></span><button class="nx" disabled aria-label="Weiter"><i class="rt"></i></button></span><span class="unit">[kN/m<sup>3</sup> ]</span></div>
<div class="row off"><label for="pm">µ:</label><span class="spin"><input id="pm" disabled><span class="ud"><button disabled aria-label="Mehr"><i class="up"></i></button><button disabled aria-label="Weniger"><i class="dn"></i></button></span><button class="nx" disabled aria-label="Weiter"><i class="rt"></i></button></span><span class="unit">[kN/m<sup>2</sup> ]</span></div>
</div></section>
</div>
<div class="figs">
<figure class="f1"><svg width="285" height="227" viewBox="0 0 285 227">
<defs><clipPath id="ca"><path d="M89.300 67.700L159.700 27.700V131L89.300 172z"/></clipPath><clipPath id="cb"><path d="M141.300 81.700L211.300 41.300V145L141.300 186z"/></clipPath></defs>
<g fill="#f0f0f1" stroke="#2c2c2c"><path d="M81.700 65.300L151.700 25.300 167.300 29.700V134L97.300 173.700 81.700 170.300z"/><path d="M81.700 65.300l15.600 3.400v105M97.300 68.700L167.300 29.700" fill="none"/></g>
<path clip-path="url(#ca)" stroke="#3a3a3a" stroke-width=".9" d="M85 -30l90 90M85 -18l90 90M85 -6l90 90M85 6l90 90M85 18l90 90M85 30l90 90M85 42l90 90M85 54l90 90M85 66l90 90M85 78l90 90M85 90l90 90M85 102l90 90M85 114l90 90M85 126l90 90M85 138l90 90M85 150l90 90M85 162l90 90"/>
<g stroke="#2c2c2c"><path d="M133.300 78.300L203.300 38.700 219.300 43V147.700L149.300 188 133.300 184.300z" fill="#f0f0f1" fill-opacity=".55"/><path d="M133.300 78.300l16 5V188M149.300 83.300L219.300 43" fill="none"/></g>
<path d="M161 132l57-32v47l-68 40v-48z" fill="#f0f0f1"/>
<path clip-path="url(#cb)" stroke="#2c2c2c" d="M99 190l54-150M109 190l54-150M119 190l54-150M129 190l54-150M139 190l54-150M149 190l54-150M159 190l54-150M169 190l54-150M179 190l54-150M189 190l54-150M199 190l54-150"/>
<path d="M89.300 67.700L159.700 27.700V131L89.300 172zM141.300 81.700L211.300 41.300V145L141.300 186zM89.300 67.700l52 14M159.700 27.700l51.600 13.600M159.700 131l51.600 14M89.300 172l52 14" fill="none" stroke="#f58218" stroke-width="3" stroke-dasharray="7 4"/>
<path d="M87 65h5.500v5.500H87zM157 25h5.500v5.500H157zM208.500 38.500h5.500V44h-5.500zM138.500 79h5.500v5.500h-5.500zM87 169.500h5.500v5.500H87zM157 128h5.500v5.500H157zM208.500 142.500h5.500v5.500h-5.500zM138.500 183.500h5.500v5.500h-5.500z" fill="#e8141c"/>
<path d="M94 40.500h7.500l22 22.500M172 154.500l22 25h6M110 178l21 24.500h7" fill="none" stroke="#2c2c2c"/>
<g fill="#222"><circle cx="124" cy="63" r="2"/><circle cx="172" cy="154.500" r="2"/><circle cx="110" cy="178" r="2"/></g>
<g font-size="11" fill="#222"><text x="48" y="44">Fläche A</text><text x="203" y="183">Fläche B</text><text x="141" y="206">Volumenkörperkanten</text></g>
</svg></figure>
<figure class="f2"><svg width="285" height="169" viewBox="0 0 285 169">
<path d="M36 37h28v95H36z" fill="#f2f5ee"/>
<path d="M28.500 37v95h7V37zM64.500 37v95h6.500V37z" fill="#f1f1ec" stroke="#8e8c88" stroke-width="1.500"/><path d="M64.500 37v95" stroke="#222" stroke-width="1.500"/>
<path d="M31.700 37v95M67.700 37v95" stroke="#f58218" stroke-width="2.500" stroke-dasharray="5 2"/><path d="M32 37h36M32 131.500h36" stroke="#f58218" stroke-width="2" stroke-dasharray="5 2"/>
<path d="M29 34h5.500v5.500H29zM65 34h5.500v5.500H65zM29 129h5.500v5.500H29zM65 129h5.500v5.500H65z" fill="#e8141c"/>
<path d="M46.500 68v26M52.500 102V76" stroke="#555" stroke-width="1.500"/><path d="M42 93h9l-4.500 9zM48 77h9l-4.500-9z" fill="#555"/>
<path d="M162.700 52v75.500H243" fill="none" stroke="#f58218" stroke-width="2"/><path d="M162.700 61v66" stroke="#3c2a1a" stroke-width="1.600"/><path d="M157 52h11.500l-5.800-10zM242 121.500v11.500l10-5.700z" fill="#f58218"/>
<g class="greek"><text x="55" y="90" font-size="15" fill="#444">τ</text><text x="135" y="49" font-size="16" fill="#f58218">|τ|</text><text x="242" y="148" font-size="15" fill="#f58218">δ</text></g>
</svg></figure>
</div>
</div>
<footer class="dfoot"><button class="sq" aria-label="Hilfe"><svg class="ic"><use href="#help"/></svg></button><button class="sq" aria-label="Kommentar"><svg class="ic"><use href="#edit"/></svg></button><button class="sq" aria-label="Einheiten"><svg class="ic"><use href="#unit"/></svg></button><button class="sq" aria-label="Auswahl"><svg class="ic"><use href="#pick"/></svg></button><span class="grow"></span><button class="cmd ok">OK</button><button class="cmd">Abbrechen</button></footer>
</div>
</section>
</main>

<section class="tables">
<h2>1.5 Volumenkörper</h2>
<div class="ttools">
<button class="tb on" aria-label="Struktur"><svg><use href="#t1"/></svg></button><button class="tb" aria-label="Lasten"><svg><use href="#t2"/></svg></button><button class="tb" aria-label="Lasttabellen"><svg><use href="#t3"/></svg></button><button class="tb" aria-label="Ergebnisse"><svg><use href="#t4"/></svg></button><button class="tb" aria-label="Dynamik"><svg><use href="#t5"/></svg></button><i class="sep"></i>
<button class="tb" aria-label="Vorherige Tabelle"><svg><use href="#tL"/></svg></button><button class="tb" aria-label="Nächste Tabelle"><svg><use href="#tR"/></svg></button><i class="sep"></i>
<button class="tb on" aria-label="Aufwärts"><svg><use href="#tU"/></svg></button><button class="tb on" aria-label="Abwärts"><svg><use href="#tD"/></svg></button><button class="tb" aria-label="Aktualisieren"><svg><use href="#tC"/></svg></button><i class="sep"></i>
<button class="tb" aria-label="Addieren"><svg><use href="#tP"/></svg></button><button class="tb" aria-label="Multiplizieren"><svg><use href="#tS"/></svg></button><button class="tb" aria-label="Teilen"><svg><use href="#tO"/></svg></button><i class="sep"></i>
<button class="tb" aria-label="Zelle leeren"><svg><use href="#tX"/></svg></button><i class="sep"></i>
<button class="tb" aria-label="Zeile löschen"><svg><use href="#rX"/></svg></button><button class="tb" aria-label="Zeile einfügen"><svg><use href="#rL"/></svg></button><button class="tb" aria-label="Zeile ausfüllen"><svg><use href="#rR"/></svg></button><i class="sep"></i>
<button class="tb" aria-label="Gelbe Zeilen"><svg><use href="#yT"/></svg></button><button class="tb" aria-label="Gefüllte Zeilen"><svg><use href="#bT"/></svg></button><i class="sep"></i>
<button class="tb" aria-label="Filter"><svg><use href="#yM"/></svg></button><i class="sep"></i>
<button class="tb" aria-label="Bearbeiten"><svg><use href="#hndL"/></svg></button><button class="tb" aria-label="Ansehen"><svg><use href="#glas"/></svg></button><button class="tb" aria-label="Excel"><svg><use href="#xls"/></svg></button><button class="tb" aria-label="Rechner"><svg><use href="#calc"/></svg></button><i class="sep"></i>
<button class="tb" aria-label="Parameter"><svg><use href="#abw"/></svg></button><button class="tb" aria-label="Formel"><svg><use href="#fx"/></svg></button><button class="tb" aria-label="Formel löschen"><svg><use href="#fxX"/></svg></button>
</div>
<div class="grid">
<table>
<colgroup><col class="c0"><col class="c1"><col class="c1"><col class="c3"><col class="c4"><col class="c5"><col class="c4"><col class="c7"><col class="c7"><col class="c9"></colgroup>
<thead>
<tr class="letters"><th rowspan="3" class="corner">Volumen<br>Nr.</th><th>A</th><th class="sel">B</th><th>C</th><th>D</th><th>E</th><th>F</th><th>G</th><th>H</th><th>I</th></tr>
<tr class="top"><th></th><th></th><th>Material</th><th colspan="2">Gas (Herstellung)</th><th>Zusammengesetzt</th><th class="dimt">Volumen</th><th class="dimt">Gewicht</th><th></th></tr>
<tr class="sub"><th>Volumenkörpertyp</th><th>Begrenzungsflächen Nr.</th><th>Nr.</th><th>Druck P [bar]</th><th>Temperatur T [°C]</th><th>Volumenkörper</th><th class="dimt">V [m<sup>3</sup>]</th><th class="dimt">G [kg]</th><th>Kommentar</th></tr>
</thead>
<tbody>
<tr><th class="rn">1</th><td><span class="cell"><i class="sw green"></i>Kontakt</span></td><td>1-7</td><td><span class="cell"><i class="sw blue"></i><span class="mid">2</span></span></td><td class="ro"></td><td class="ro"></td><td class="ctr"><input type="checkbox" aria-label="Zusammengesetzt"></td><td class="ro num">0.023</td><td class="ro num">0.00</td><td></td></tr>
<tr><th class="rn"></th><td></td><td></td><td></td><td></td><td></td><td></td><td></td><td></td><td></td></tr>
</tbody>
</table>
</div>
</section>
</body>
</html>
```
FILE: styles.css
```css
* { box-sizing: border-box; }
body {
  margin: 0; height: 100vh; overflow: hidden;
  display: flex; flex-direction: column;
  background: #cfd3dc; color: #000;
  font: 11px/14px "Liberation Sans", Arial, sans-serif;
}
button, input, select { font: inherit; color: inherit; margin: 0; padding: 0; border-radius: 0; }
button { border: 0; background: none; }
h1, h2, h3, p, figure { margin: 0; font-weight: 400; font-size: inherit; }
.paints { position: absolute; width: 0; height: 0; }
.sprite { display: none; }
.ic { width: 16px; height: 16px; display: block; flex: none; }
symbol text { font-family: "Liberation Serif", serif; }

.titlebar { flex: 0 0 23px; display: flex; align-items: center; gap: 6px; padding-left: 2px; background: #fff; }
.titlebar h1 { font: 11px/20px "Open Sans", sans-serif; }

.menubar { flex: 0 0 24px; display: flex; align-items: center; color: #4c4f5c; }
.menubar .bridge { width: 16px; height: 12px; margin-right: 3px; flex: none; }
.menubar button { font: 11px/20px "Open Sans", sans-serif; padding: 0 7px; }
.menubar u { text-underline-offset: 2px; }

.grip { flex: 0 0 10px; height: 16px; background: repeating-linear-gradient(#a6a9b3 0 2px, transparent 2px 4px) no-repeat 4px 0 / 2px 16px; }
.toolrow { flex: 0 0 26px; display: flex; gap: 2px; }
.bar {
  display: flex; align-items: center; padding-right: 2px;
  background: linear-gradient(#eceff8, #d3d8e4);
  border-bottom: 1px solid #a4a7b1; border-radius: 0 4px 0 0;
}
.tb { flex: 0 0 22px; height: 22px; display: flex; align-items: center; justify-content: center; }
.tb svg { width: 16px; height: 16px; flex: none; }
.tb.on { border: 1px solid #ad9470; background: linear-gradient(#fbd9a8, #fdbd70 55%, #ffe28c); }
.tb.dim svg { opacity: .5; }
.tb.drop { flex-basis: 35px; justify-content: flex-start; gap: 6px; padding-left: 3px; }
.tb.drop::after { content: ""; border: 3px solid transparent; border-top: 4px solid #6a6e78; border-bottom: 0; }
.sep { flex: 0 0 8px; height: 14px; background: linear-gradient(90deg, #a9adb8 1px, #fff 1px) no-repeat 3px 0 / 2px 14px; }

.pick { display: grid; align-items: center; }
.pick > * { grid-area: 1 / 1; }
.pick select { appearance: none; width: 100%; height: 21px; padding-left: 3px; border: 1px solid #707070; outline: 0; opacity: 1; }
.pick .chev { justify-self: end; width: 10px; height: 6px; margin-right: 4px; pointer-events: none; }
.pick.loadcase { width: 216px; margin: 0 2px; }
.pick.loadcase select { height: 19px; background: #efefef; border-color: #9c9ca0; }
.tri { justify-self: end; margin-right: 5px; border: 3px solid transparent; border-top: 4px solid #777; border-bottom: 0; }

.work { flex: 1; min-height: 0; display: flex; border-bottom: 5px solid #cfd3dc; }
.dock { flex: 0 0 24px; padding-top: 4px; }
.docktab {
  writing-mode: vertical-rl; width: 21px; height: 171px; text-align: left; padding-top: 3px;
  font-size: 12px; color: #5c5c5c;
  background: linear-gradient(90deg, #fff3c8, #fcd873); border: 1px solid #a9a9b4; border-left: 0;
}
.view { position: relative; flex: 1; min-width: 0; background: #fff; border-top: 2px solid #6d6d70; border-left: 1px solid #6d6d70; overflow: hidden; }
.mode { padding: 5px 4px 0; }
.model { display: block; }
.model text, .f1 text { font-family: "Liberation Sans", Arial, sans-serif; }

.dialog { position: absolute; right: 6px; top: 52px; width: 646px; background: #f0f0f0; border: 1px solid #6b6b6b; }
.dtitle { height: 25px; display: flex; align-items: center; justify-content: space-between; padding: 0 9px 1px 3px; background: #fff; }
.dtitle h2 { font: 11px/20px "Open Sans", sans-serif; }
.close svg { display: block; }
.tabs { display: flex; align-items: flex-end; height: 27px; padding-left: 8px; }
.tabs button { height: 18px; padding: 0 4px; border: 1px solid #d9d9d9; border-bottom: 0; border-left-width: 0; }
.tabs button:first-child { border-left-width: 1px; padding: 0 6px; }
.tabs .cur { height: 22px; margin-bottom: -1px; padding: 0 7px 3px; background: #fff; }
.pane { display: flex; gap: 8px; margin: 0 8px 0 6px; padding: 9px 7px 8px 8px; background: #fff; border: 1px solid #dadada; }
.form { flex: 1; display: flex; flex-direction: column; }
.group { display: flex; flex-direction: column; }
.group h3 { height: 17px; padding: 1px 2px; color: #264a7a; background: #dce6f4; border-bottom: 1px solid #fff; clip-path: polygon(0 0, calc(100% - 10px) 0, 100% 10px, 100% 100%, 0 100%); }
.gbody { flex: 1; padding: 2px 3px 3px 2px; background: #eff3f9; border: solid #a4a4ee; border-width: 0 1px 1px 0; border-left: 1px solid #d9e4f4; }
.g1 { height: 46px; margin-bottom: 9px; }
.g1 .gbody { padding-top: 3px; }
.g2 { height: 80px; margin-bottom: 10px; }
.g3 { height: 84px; margin-bottom: 10px; }
.g4 { height: 171px; }
.box { width: 100%; height: 20px; padding-left: 3px; border: 1px solid #777; background: #f0f0f0; outline: 0; box-shadow: inset 0 0 0 1px #fff; display: block; }
.box.short { width: 44px; }
.row { display: flex; align-items: center; margin: 2px 0 6px; height: 21px; }
.row label { width: 72px; }
.white { width: 60px; margin-right: 4px; }
.white select { background: #fff; }
.grey select { background: #e1e1e1; border-color: #adadad; }
.sq { width: 25px; height: 21px; display: grid; place-items: center; background: #e1e1e1; border: 1px solid #adadad; }
.plabel { margin: 12px 0 3px; }
.row.off { color: #8a8a8a; margin: 0 0 3px; }
.row.off label { width: 34px; }
.unit { color: #6c6c6c; }
.unit sup, th sup { font-size: 9px; line-height: 0; }
.spin { display: flex; gap: 1px; width: 92px; height: 20px; padding: 1px; margin-right: 7px; border: 1px solid #7f9db9; background: #fff; }
.spin input { flex: 1; min-width: 0; border: 0; background: #f0f0f0; }
.ud { display: flex; flex-direction: column; width: 12px; gap: 1px; }
.spin button { flex: 1; display: grid; place-items: center; border: 1px solid #e3e3e3; background: #f0f0f0; }
.spin .nx { flex: 0 0 9px; }
.spin i { border: 3px solid transparent; }
.spin .up { border-bottom-color: #555; border-top: 0; }
.spin .dn { border-top-color: #555; border-bottom: 0; }
.spin .rt { border-left-color: #555; border-right: 0; }

.figs { display: flex; flex-direction: column; gap: 10px; }
.figs figure { border: solid #9b9b9b; border-width: 1px 0 0 1px; background: linear-gradient(45deg, #fff 35%, #fdf5dc 90%); }
.figs svg { display: block; }
.greek text { font-family: "Liberation Serif", serif; }
.dfoot { display: flex; gap: 10px; padding: 9px 7px 7px; }
.grow { flex: 1; }
.cmd { width: 73px; height: 21px; background: #e1e1e1; border: 1px solid #adadad; }
.cmd.ok { border: 2px solid #0078d7; }

.tables { flex: 0 0 114px; margin-left: 23px; display: flex; flex-direction: column; background: #e9edf6; overflow: hidden; border-radius: 4px 0 0 0; }
.tables h2 { height: 20px; padding-left: 4px; font: 11px/20px "Open Sans", sans-serif; color: #3c4250; }
.ttools { height: 25px; display: flex; align-items: center; padding: 0 0 1px 9px; background: linear-gradient(#e9edf6, #d3d8e4); }
.grid { background: #fff; border-top: 1px solid #666; border-left: 1px solid #666; padding: 2px 0 0 2px; overflow: hidden; flex: 1; }
table { table-layout: fixed; width: 1874px; border-collapse: collapse; }
.c0 { width: 45px; } .c1 { width: 162px; } .c3 { width: 54px; } .c4 { width: 90px; }
.c5 { width: 102px; } .c7 { width: 78px; } .c9 { width: 1013px; }
th, td { height: 16px; padding: 0 4px; border: 1px solid #8d8d8d; font-weight: 400; line-height: 14px; white-space: nowrap; }
thead th { background: #f0f0f0; padding: 0; }
.letters th { height: 14px; background: #e1e1e1; border-color: #555; box-shadow: inset 1px 1px 0 #fff; line-height: 12px; }
.letters .sel { background: #0078d7; color: #fff; box-shadow: none; }
.top th { border-bottom-color: #f0f0f0; vertical-align: top; }
.sub th { height: 17px; border-top-color: #f0f0f0; vertical-align: top; }
.letters .corner { padding-top: 8px; border-color: #8d8d8d; line-height: 13px; }
tbody th.rn { background: #e1e1e1; box-shadow: inset 1px 1px 0 #fff; }
.dimt, .num { color: #858585; }
.ro { background: #f0f0f0; }
.num { text-align: right; }
.ctr { text-align: center; }
.cell { display: flex; align-items: center; gap: 4px; margin-left: -3px; }
.sw { flex: none; width: 13px; height: 13px; border: 1px solid #333; }
.green { background: #7ab800; }
.blue { background: #6464ff; }
.mid { flex: 1; text-align: center; }
input[type="checkbox"] { appearance: none; display: block; width: 11px; height: 11px; margin: 0 auto; background: #fff; border: 1px solid #000; box-shadow: 1px 1px 0 #000; }
```
